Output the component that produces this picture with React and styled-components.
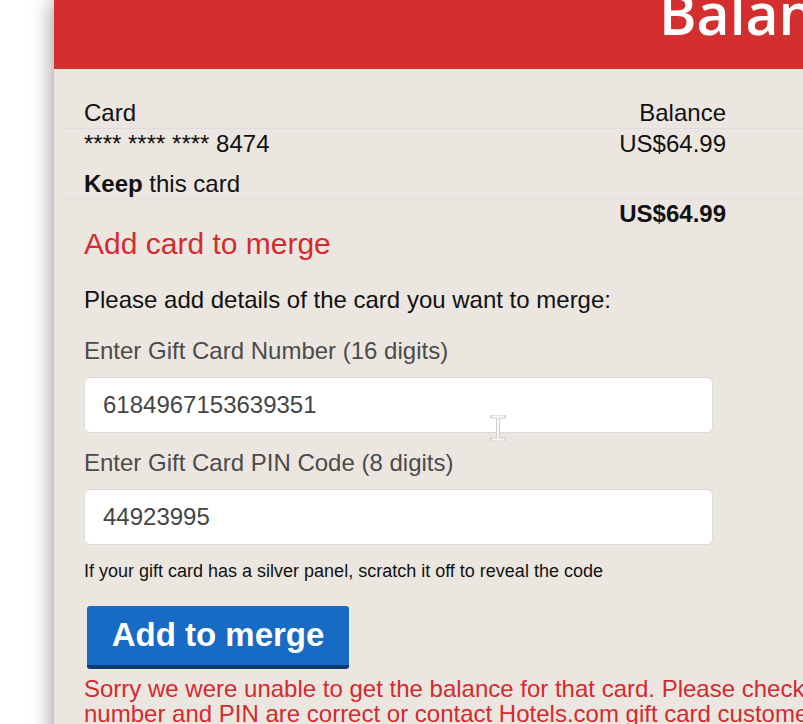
import React from 'react';
import styled, { createGlobalStyle } from 'styled-components';

const GlobalStyle = createGlobalStyle`
  html, body {
    margin: 0;
    padding: 0;
    background: #ffffff;
    overflow: hidden;
  }

  body {
    font-family: 'Liberation Sans', Arial, sans-serif;
    color: #111111;
  }
`;

const PageStyled = styled.div`
  width: 803px;
  height: 724px;
  overflow: hidden;
  padding-left: 54px;
  box-sizing: border-box;
`;

const PanelStyled = styled.div`
  width: 900px;
  min-height: 724px;
  background: #ebe7e0;
  box-shadow: 0 0 22px rgba(0, 0, 0, 0.45);
`;

const HeaderStyled = styled.header`
  height: 69px;
  background: #d32f2f;
  overflow: hidden;
  padding-left: 605px;
`;

const TitleStyled = styled.h1`
  margin: -15px 0 0;
  font-family: 'Open Sans', 'Noto Sans', sans-serif;
  font-weight: 600;
  font-size: 57px;
  line-height: 1;
  color: #ffffff;
  white-space: nowrap;
`;

const ContentStyled = styled.div`
  padding: 30px 0 40px 7px;
`;

const TableStyled = styled.div`
  display: flex;
  flex-direction: column;
`;

const RowStyled = styled.div`
  display: grid;
  grid-template-columns: 1fr auto;
  padding: ${({ $first }) => ($first ? '0 228px 2px 23px' : '1px 228px 1px 23px')};
  border-bottom: ${({ $noBorder }) => ($noBorder ? 'none' : '1px solid #dcdde0')};
  font-size: 24px;
  line-height: 27px;
  font-weight: ${({ $bold }) => ($bold ? 700 : 400)};
`;

const CellStyled = styled.div`
  text-align: ${({ $right }) => ($right ? 'right' : 'left')};
`;

const KeepStyled = styled.div`
  margin-top: 13px;
`;

const FormStyled = styled.div`
  padding-left: 23px;
`;

const HeadingStyled = styled.h2`
  margin: -1px 0 0;
  font-size: 30px;
  line-height: 34px;
  font-weight: 400;
  color: #d52a2e;
`;

const IntroStyled = styled.p`
  margin: 25px 0 0;
  font-size: 24px;
  line-height: 27px;
`;

const LabelStyled = styled.label`
  display: block;
  margin-top: ${({ $gap }) => $gap}px;
  font-size: 24px;
  line-height: 27px;
  color: #4b4b4b;
`;

const FieldStyled = styled.div`
  position: relative;
  margin-top: 13px;
  width: 629px;
`;

const InputStyled = styled.input`
  display: block;
  width: 100%;
  height: 56px;
  box-sizing: border-box;
  padding: 0 18px;
  border: 1px solid #dadada;
  border-radius: 6px;
  background: #ffffff;
  font-family: 'Liberation Sans', Arial, sans-serif;
  font-size: 24px;
  color: #454545;
  outline: none;
`;

const CursorStyled = styled.svg`
  position: absolute;
  left: 406px;
  top: 38px;
  pointer-events: none;
`;

const HelpStyled = styled.p`
  margin: 16px 0 0;
  font-size: 18px;
  line-height: 20px;
`;

const ButtonStyled = styled.button`
  display: flex;
  align-items: center;
  justify-content: center;
  margin: 25px 0 0 3px;
  width: 262px;
  height: 63px;
  box-sizing: border-box;
  padding: 0 0 2px;
  border: none;
  border-bottom: 4px solid #0c3c70;
  border-radius: 3px;
  background: #176bc5;
  color: #ffffff;
  font-family: 'Liberation Sans', Arial, sans-serif;
  font-weight: 700;
  font-size: 33px;
  cursor: pointer;
`;

const ErrorStyled = styled.p`
  margin: 7px 0 0;
  width: 830px;
  font-size: 24px;
  line-height: 25px;
  color: #d52a2e;
`;

const IBeam = () => (
  <CursorStyled width="16" height="26" viewBox="0 0 16 26">
    <path
      d="M1 1.5h14M1 24.5h14M8 1.5v23"
      stroke="#cfcfcf"
      strokeWidth="4"
      fill="none"
      strokeLinecap="round"
    />
    <path
      d="M1.5 1.5h13M1.5 24.5h13M8 1.5v23"
      stroke="#f7f7f7"
      strokeWidth="2"
      fill="none"
    />
  </CursorStyled>
);

const cards = [{ number: '**** **** **** 8474', balance: 'US$64.99' }];

class App extends React.Component {
  render() {
    return (
      <PageStyled>
        <GlobalStyle />
        <PanelStyled>
          <HeaderStyled>
            <TitleStyled>Balance Merge</TitleStyled>
          </HeaderStyled>
          <ContentStyled>
            <TableStyled>
              <RowStyled $first>
                <CellStyled>Card</CellStyled>
                <CellStyled $right>Balance</CellStyled>
              </RowStyled>
              {cards.map((card) => (
                <RowStyled key={card.number}>
                  <CellStyled>
                    <div>{card.number}</div>
                    <KeepStyled>
                      <b>Keep</b> this card
                    </KeepStyled>
                  </CellStyled>
                  <CellStyled $right>{card.balance}</CellStyled>
                </RowStyled>
              ))}
              <RowStyled $noBorder $bold>
                <CellStyled />
                <CellStyled $right>US$64.99</CellStyled>
              </RowStyled>
            </TableStyled>
            <FormStyled>
              <HeadingStyled>Add card to merge</HeadingStyled>
              <IntroStyled>Please add details of the card you want to merge:</IntroStyled>
              <LabelStyled $gap={24} htmlFor="card-number">
                Enter Gift Card Number (16 digits)
              </LabelStyled>
              <FieldStyled>
                <InputStyled id="card-number" defaultValue="6184967153639351" />
                <IBeam />
              </FieldStyled>
              <LabelStyled $gap={16} htmlFor="card-pin">
                Enter Gift Card PIN Code (8 digits)
              </LabelStyled>
              <FieldStyled>
                <InputStyled id="card-pin" defaultValue="44923995" />
              </FieldStyled>
              <HelpStyled>
                If your gift card has a silver panel, scratch it off to reveal the code
              </HelpStyled>
              <ButtonStyled>Add to merge</ButtonStyled>
              <ErrorStyled>
                Sorry we were unable to get the balance for that card. Please check the card
                number and PIN are correct or contact Hotels.com gift card customer service.
              </ErrorStyled>
            </FormStyled>
          </ContentStyled>
        </PanelStyled>
      </PageStyled>
    );
  }
}

export default App;
